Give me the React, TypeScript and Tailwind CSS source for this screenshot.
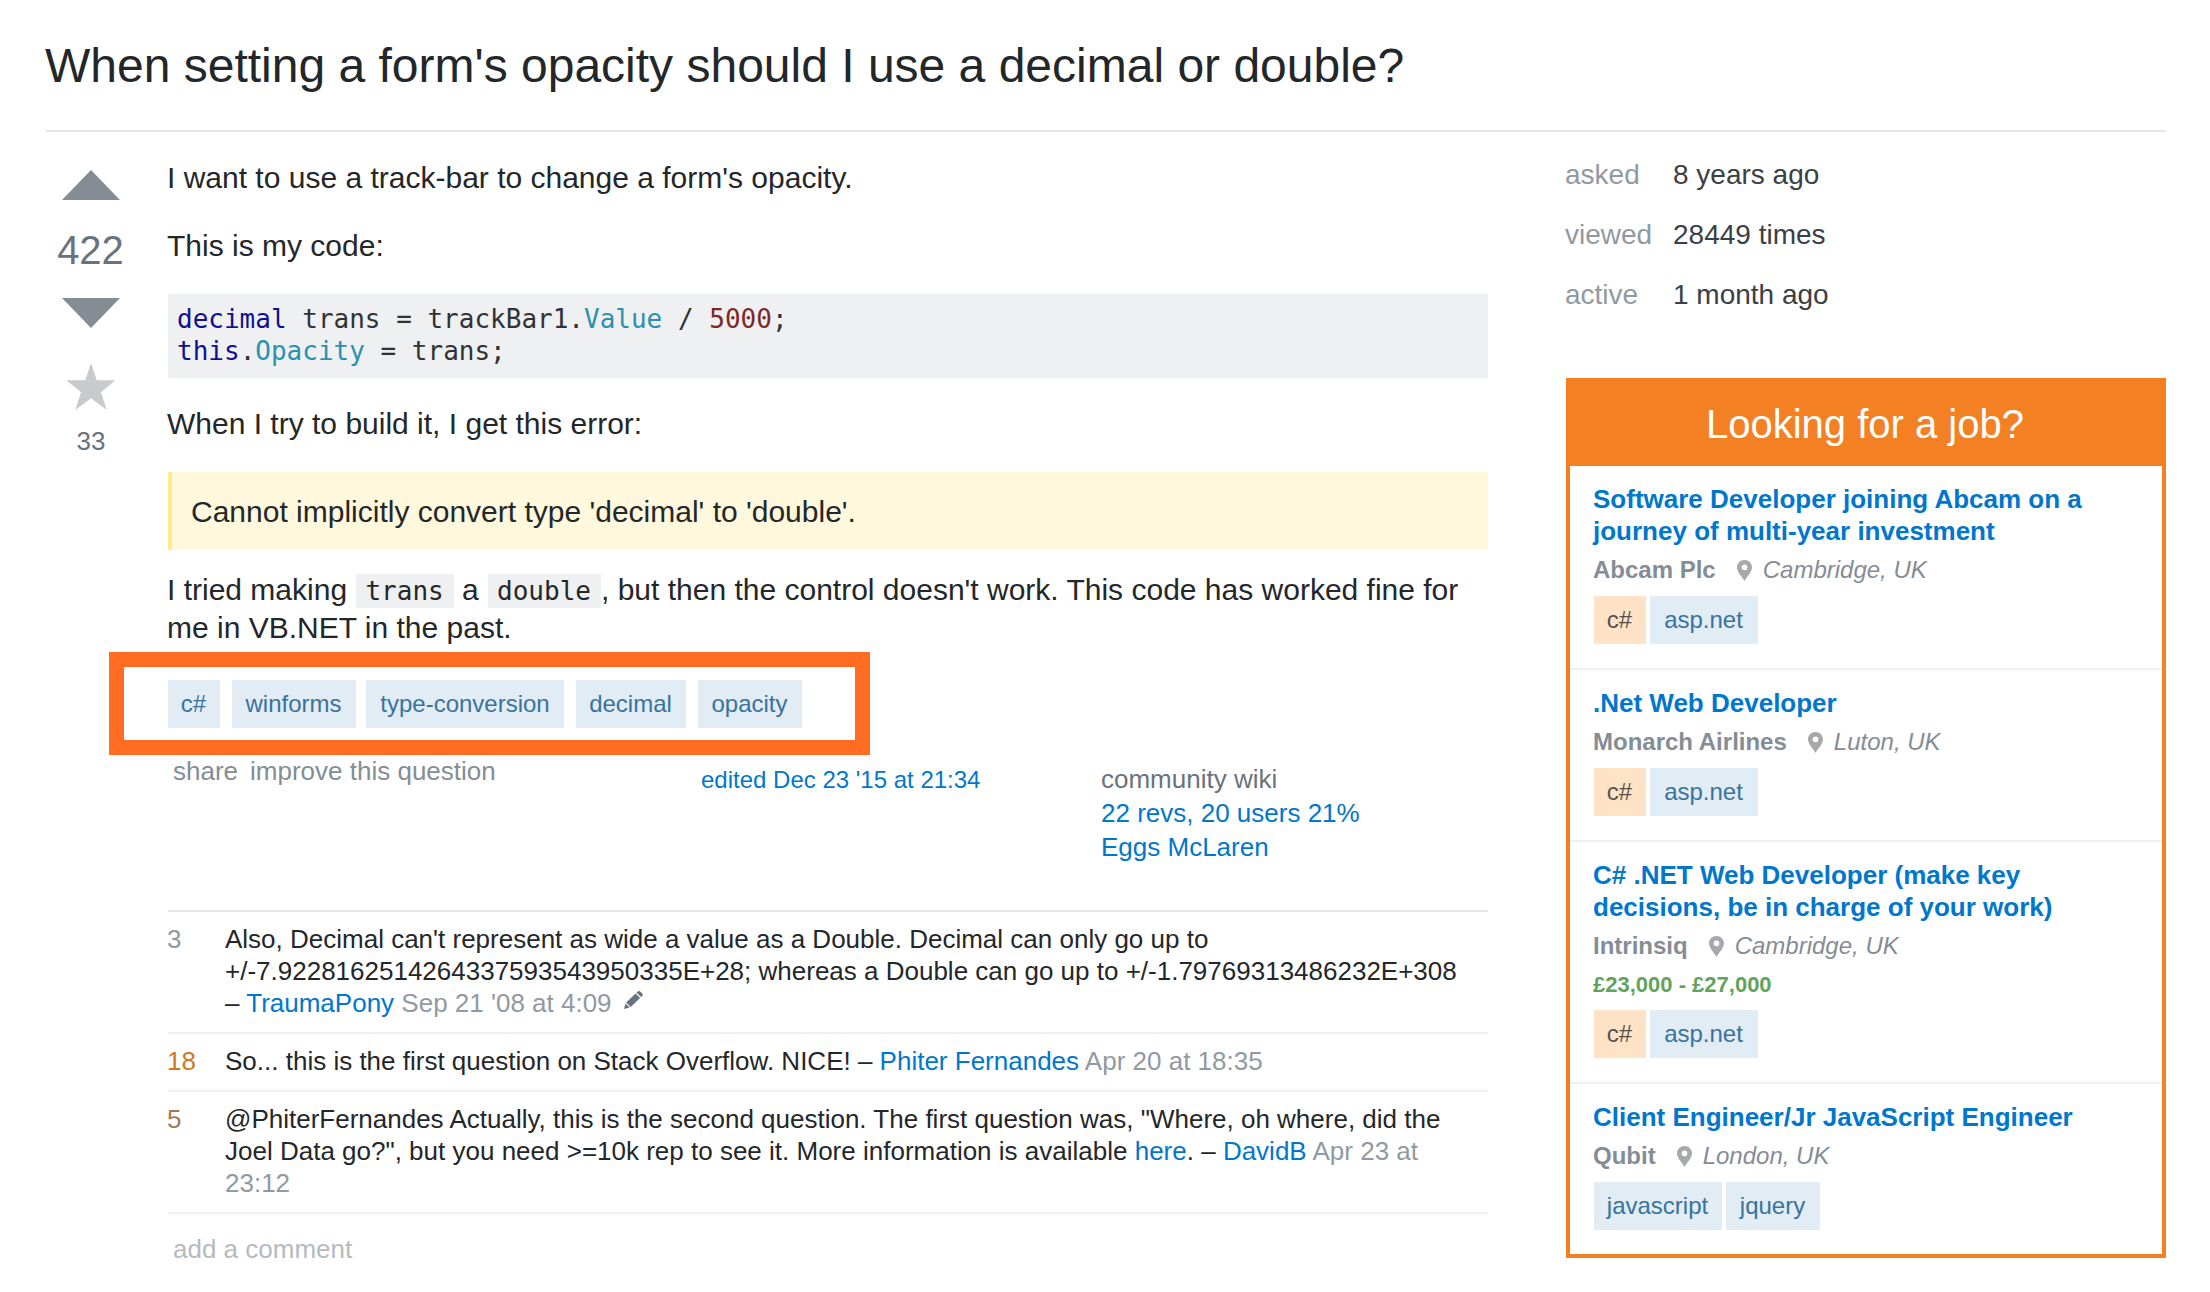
import React from "react";

type TagProps = { label: string; className: string };

function Tag({ label, className }: TagProps) {
  return (
    <a className={`flex h-[48px] items-center justify-center whitespace-nowrap text-[24px] leading-[28px] ${className}`}>
      {label}
    </a>
  );
}

const BLUE = "bg-[#e1ecf4] text-[#39739d]";
const PEACH = "bg-[#ffe3c6] text-[#5b5148]";

const questionTags = [
  { label: "c#", className: `w-[52px] mr-[12px] pr-px ${BLUE}` },
  { label: "winforms", className: `w-[124px] mr-[10px] pr-px ${BLUE}` },
  { label: "type-conversion", className: `w-[198px] mr-[12px] ${BLUE}` },
  { label: "decimal", className: `w-[110px] mr-[12px] pr-px ${BLUE}` },
  { label: "opacity", className: `w-[104px] pr-px ${BLUE}` },
];

const csharp = { label: "c#", className: `w-[52px] pr-px ${PEACH}` };
const aspnet = { label: "asp.net", className: `w-[108px] pr-px ${BLUE}` };

const jobs = [
  {
    title: ["Software Developer joining Abcam on a", "journey of multi-year investment"],
    company: "Abcam Plc",
    place: "Cambridge, UK",
    tags: [csharp, aspnet],
  },
  { title: [".Net Web Developer"], company: "Monarch Airlines", place: "Luton, UK", tags: [csharp, aspnet] },
  {
    title: ["C# .NET Web Developer (make key", "decisions, be in charge of your work)"],
    company: "Intrinsiq",
    place: "Cambridge, UK",
    salary: "£23,000 - £27,000",
    tags: [csharp, aspnet],
  },
  {
    title: ["Client Engineer/Jr JavaScript Engineer"],
    company: "Qubit",
    place: "London, UK",
    tags: [
      { label: "javascript", className: `w-[128px] pr-px ${BLUE}` },
      { label: "jquery", className: `w-[94px] pr-px ${BLUE}` },
    ],
  },
];

function Pin() {
  return (
    <svg className="ml-[21px] mr-[11px] mt-[5px] h-[21px] w-[15px]" viewBox="0 0 15 21">
      <path
        fill="#a6a8ab"
        fillRule="evenodd"
        d="M7.5 0C3.3 0 0 3.2 0 7.3c0 4.5 4.4 8.600 7.500 13.700C10.600 15.900 15 11.800 15 7.300 15 3.200 11.700 0 7.500 0zm0 4.600a2.800 2.800 0 1 1 0 5.600 2.800 2.800 0 0 1 0-5.600z"
      />
    </svg>
  );
}

function VoteCell() {
  return (
    <div className="flex w-[90px] flex-col items-center pt-[38px] text-[#6a737c]">
      <svg className="h-[30px] w-[58px]" viewBox="0 0 58 30">
        <path d="M29 0 58 30H0z" fill="#858c93" />
      </svg>
      <span className="mt-[27px] pr-px text-[40px] leading-[46px]">422</span>
      <svg className="mt-[25px] h-[30px] w-[58px]" viewBox="0 0 58 30">
        <path d="M0 0H58L29 30z" fill="#858c93" />
      </svg>
      <svg className="mt-[35px] h-[47px] w-[50px]" viewBox="0 0 50 47">
        <path d="M25 0 30.700 17.300H49.500L35 29.300 40.700 47 25 35.300 9.300 47 15 29.300.5 17.300H19.300z" fill="#c8cacd" />
      </svg>
      <span className="mt-[15px] text-[26px] leading-[32px]">33</span>
    </div>
  );
}

function InlineCode({ children }: { children: React.ReactNode }) {
  return (
    <code className="ml-px bg-[#eff0f1] py-[2px] pl-[9px] pr-[10px] font-['DejaVu_Sans_Mono',monospace] text-[26px] leading-none">
      {children}
    </code>
  );
}

function Link({ children }: { children: React.ReactNode }) {
  return <a className="text-[#0077cc]">{children}</a>;
}

function When({ children }: { children: React.ReactNode }) {
  return <span className="text-[#9199a1]">{children}</span>;
}

function Comment({ score, color, children }: { score: string; color: string; children: React.ReactNode }) {
  return (
    <li className="flex border-b-2 border-[#eff0f1] pb-[13px] pt-[11px] leading-[32px]">
      <span className={`-ml-px w-[58px] shrink-0 ${color}`}>{score}</span>
      <div className="whitespace-nowrap">{children}</div>
    </li>
  );
}

export default function App() {
  return (
    <div className="h-[1292px] w-[2210px] overflow-hidden bg-white pl-[46px] pr-[44px] font-['Liberation_Sans',Arial,sans-serif] text-[#242729]">
      <header className="h-[132px] border-b-2 border-[#e4e6e8] pt-[38px]">
        <h1 className="-ml-px whitespace-nowrap text-[48px] leading-[56px]">
          When setting a form's opacity should I use a decimal or double?
        </h1>
      </header>
      <div className="flex items-start">
        <VoteCell />
        <main className="ml-[32px] w-[1320px] pt-[27px]">
          <div className="text-[30px] leading-[38px]">
            <p className="-ml-px">I want to use a track-bar to change a form's opacity.</p>
            <p className="-ml-px mt-[30px]">This is my code:</p>
            <pre className="mt-[29px] h-[84px] bg-[#eff0f1] pl-[9px] pt-[9px] font-['DejaVu_Sans_Mono',monospace] text-[26px] leading-[32px] text-[#303336]">
              <span className="text-[#101094]">decimal</span>
              {" trans = trackBar1."}
              <span className="text-[#2b91af]">Value</span>
              {" / "}
              <span className="text-[#7d2727]">5000</span>
              {";\n"}
              <span className="text-[#101094]">this</span>.<span className="text-[#2b91af]">Opacity</span>
              {" = trans;"}
            </pre>
            <p className="-ml-px mt-[27px]">When I try to build it, I get this error:</p>
            <blockquote className="mt-[29px] h-[78px] border-l-4 border-[#ffeb8e] bg-[#fff8dc] pl-[19px] pt-[21px]">
              Cannot implicitly convert type 'decimal' to 'double'.
            </blockquote>
            <p className="-ml-px mt-[21px] h-[76px] whitespace-nowrap">
              I tried making <InlineCode>trans</InlineCode> a <InlineCode>double</InlineCode>, but then the control doesn't
              work. This code has worked fine for
              <br />
              me in VB.NET in the past.
            </p>
          </div>

          <div className="relative mt-[33px] flex">
            {questionTags.map((t) => (
              <Tag key={t.label} {...t} />
            ))}
            <div className="pointer-events-none absolute -left-[59px] -top-[28px] h-[103px] w-[761px] border-[15px] border-[#ff6c22]" />
          </div>

          <div className="flex h-[182px] text-[26px]">
            <div className="w-[533px] pl-[5px] pt-[27px] leading-[32px] text-[#848d95]">
              <a>share</a>
              <a className="ml-[12px]">improve this question</a>
            </div>
            <div className="w-[400px] pt-[34px] text-[24px] leading-[35px]">
              <Link>edited Dec 23 '15 at 21:34</Link>
            </div>
            <div className="pt-[34px] leading-[34px] text-[#6a737c]">
              community wiki
              <br />
              <Link>
                22 revs, 20 users 21%
                <br />
                Eggs McLaren
              </Link>
            </div>
          </div>

          <ul className="border-t-2 border-[#e4e6e8] text-[26px]">
            <Comment score="3" color="text-[#9199a1]">
              Also, Decimal can't represent as wide a value as a Double. Decimal can only go up to
              <br />
              +/-7.9228162514264337593543950335E+28; whereas a Double can go up to +/-1.79769313486232E+308
              <br />– <Link>TraumaPony</Link> <When>Sep 21 '08 at 4:09</When>
              <svg className="ml-[12px] inline-block h-[18px] w-[19px] align-[3px]" viewBox="0 0 19 18">
                <path
                  fill="#6a737c"
                  d="M12.500 1.700 13.700.6c.7-.7 1.800-.7 2.500 0l2 1.900c.7.7.7 1.700 0 2.400L17 6zM11.600 2.600 16.100 6.900 6.700 15.900 2.200 11.600zM1.400 12.500 5.700 16.600 0 18z"
                />
              </svg>
            </Comment>
            <Comment score="18" color="text-[#d1771f]">
              So... this is the first question on Stack Overflow. NICE! – <Link>Phiter Fernandes</Link>{" "}
              <When>Apr 20 at 18:35</When>
            </Comment>
            <Comment score="5" color="text-[#a07a50]">
              @PhiterFernandes Actually, this is the second question. The first question was, "Where, oh where, did the
              <br />
              Joel Data go?", but you need &gt;=10k rep to see it. More information is available <Link>here</Link>. –{" "}
              <Link>DavidB</Link> <When>Apr 23 at</When>
              <br />
              <When>23:12</When>
            </Comment>
          </ul>
          <a className="mt-[19px] block pl-[5px] text-[26px] leading-[32px] text-[#b5babf]">add a comment</a>
        </main>

        <aside className="ml-[78px] w-[600px] pt-[27px]">
          <dl className="-ml-px grid grid-cols-[108px_1fr] gap-y-[28px] text-[28px] leading-[32px] text-[#3b4045]">
            <dt className="text-[#9199a1]">asked</dt>
            <dd>8 years ago</dd>
            <dt className="text-[#9199a1]">viewed</dt>
            <dd>28449 times</dd>
            <dt className="text-[#9199a1]">active</dt>
            <dd>1 month ago</dd>
          </dl>

          <section className="mt-[67px] h-[880px] border-4 border-[#f48024]">
            <h2 className="h-[84px] bg-[#f48024] pr-[2px] pt-[19px] text-center text-[40px] leading-[46px] text-white">
              Looking for a job?
            </h2>
            {jobs.map((job) => (
              <article
                key={job.title[0]}
                className="border-b-2 border-[#eff0f1] pb-[24px] pl-[23px] pt-[17px] last:border-b-0"
              >
                <h3 className="whitespace-nowrap text-[26px] font-bold leading-[32px] text-[#0077cc]">
                  {job.title.map((line) => (
                    <span key={line} className="block">
                      {line}
                    </span>
                  ))}
                </h3>
                <div className="mt-[8px] flex items-start text-[24px] leading-[30px] text-[#848d95]">
                  <span className="font-bold">{job.company}</span>
                  <Pin />
                  <span className="italic">{job.place}</span>
                </div>
                {job.salary && (
                  <div className="mt-[10px] text-[22px] font-bold leading-[28px] text-[#62a35c]">{job.salary}</div>
                )}
                <div className="ml-px mt-[11px] flex gap-[4px]">
                  {job.tags.map((t) => (
                    <Tag key={t.label} {...t} />
                  ))}
                </div>
              </article>
            ))}
          </section>
        </aside>
      </div>
    </div>
  );
}
